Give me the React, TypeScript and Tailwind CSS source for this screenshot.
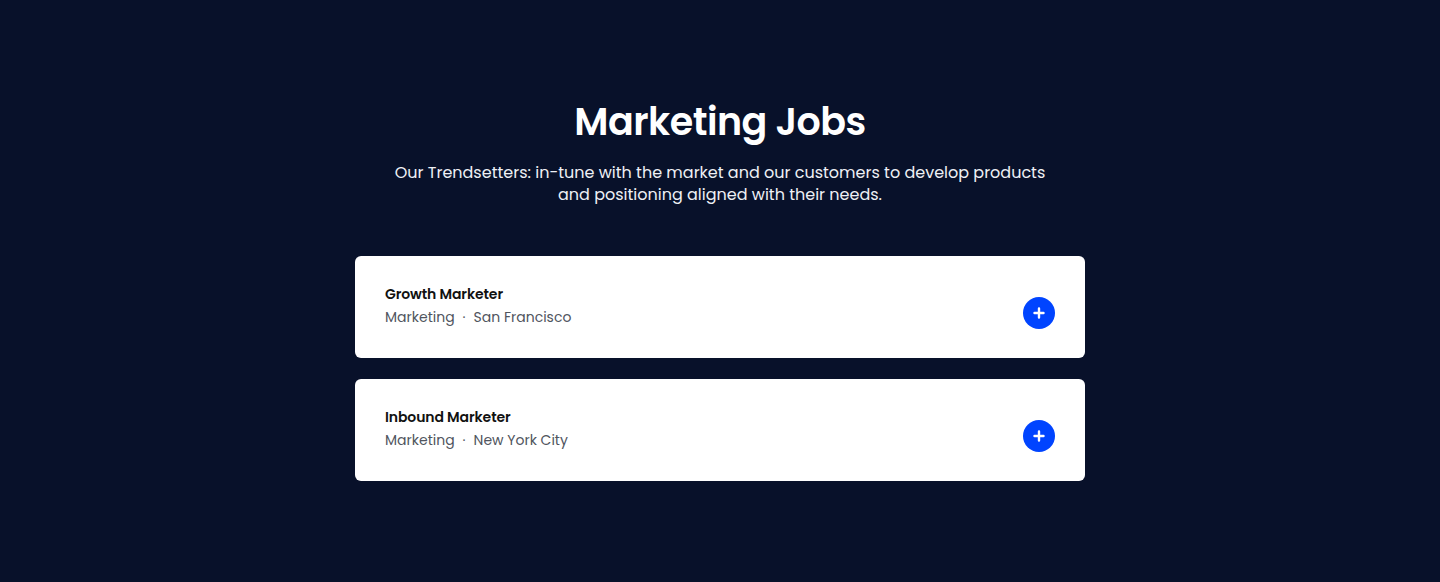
import React from "react";

const jobs = [
  { title: "Growth Marketer", dept: "Marketing", loc: "San Francisco" },
  { title: "Inbound Marketer", dept: "Marketing", loc: "New York City" },
];

export default function App() {
  return (
    <div
      className="min-h-[582px] w-full bg-[#08112a] flex flex-col items-center pt-[96px]"
      style={{ fontFamily: "Poppins, 'DejaVu Sans', sans-serif" }}
    >
      <h1 className="text-[38px] leading-[52px] font-semibold text-white tracking-[-0.5px]">
        Marketing Jobs
      </h1>
      <p className="mt-[14px] w-[660px] text-center text-[16px] leading-[22px] text-[#eef0f5]">
        Our Trendsetters: in-tune with the market and our customers to develop products and positioning aligned with their needs.
      </p>
      <div className="mt-[50px] w-[730px] flex flex-col gap-[21px]">
        {jobs.map((j) => (
          <div
            key={j.title}
            className="h-[102px] bg-white rounded-[6px] flex items-center justify-between pl-[30px] pr-[30px]"
          >
            <div className="flex flex-col mt-[-4px]">
              <div className="text-[14px] leading-[20px] font-semibold text-[#111] tracking-[-0.1px]">{j.title}</div>
              <div className="mt-[3px] text-[14px] leading-[20px] text-[#50555e] flex items-center">
                <span>{j.dept}</span>
                <span className="mx-[8px]">·</span>
                <span>{j.loc}</span>
              </div>
            </div>
            <button className="mt-[12px] w-[32px] h-[32px] rounded-full bg-[#0044ff] flex items-center justify-center">
              <svg width="12" height="12" viewBox="0 0 12 12">
                <path d="M6 1.5v9M1.5 6h9" stroke="white" strokeWidth="2.4" strokeLinecap="round" />
              </svg>
            </button>
          </div>
        ))}
      </div>
    </div>
  );
}
